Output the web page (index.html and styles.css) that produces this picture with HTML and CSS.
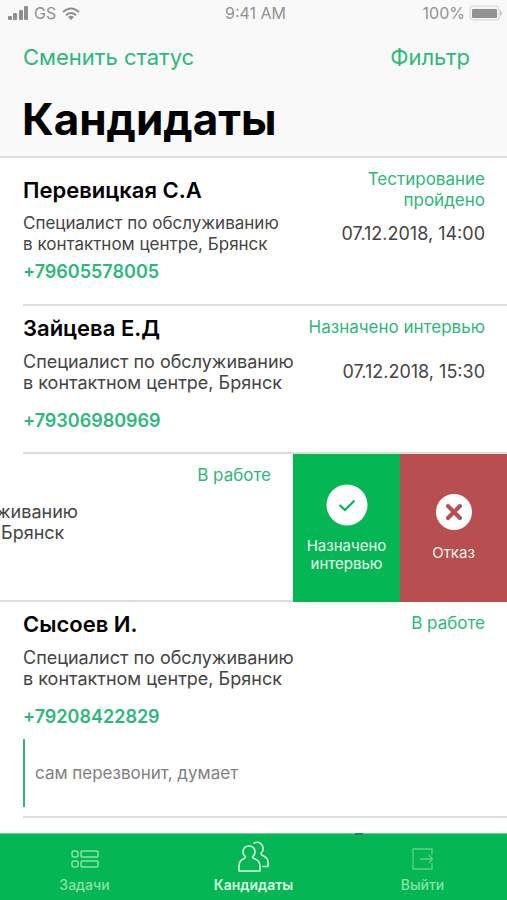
FILE: index.html
```html
<!DOCTYPE html>
<html lang="ru">
<head>
    <meta charset="UTF-8">
    <meta name="viewport" content="width=device-width, initial-scale=1.0">
    <title>Кандидаты</title>
    <link rel="stylesheet" href="styles.css">
</head>
<body>
    <div class="app">
        <header class="header">
            <div class="statusbar">
                <div class="carrier">
                    <svg width="20" height="14" viewBox="0 0 20 14" fill="#8e8e8e">
                        <rect x="0" y="10" width="4" height="4" rx="1"/>
                        <rect x="5" y="7" width="4" height="7" rx="1"/>
                        <rect x="11" y="4" width="4" height="10" rx="1"/>
                        <rect x="16" y="0" width="4" height="14" rx="1"/>
                    </svg>
                    <span>GS</span>
                    <svg width="18" height="13" viewBox="0 0 18 13" fill="none" stroke="#8e8e8e" stroke-width="2">
                        <path d="M1 5Q9-2 17 5"/>
                        <path d="M4 8.200Q9 3.800 14 8.200"/>
                        <path d="M6 10Q9 7.500 12 10L9 13Z" fill="#8e8e8e" stroke="none"/>
                    </svg>
                </div>
                <span>9:41 AM</span>
                <div class="battery">
                    <span>100%</span>
                    <svg width="34" height="16" viewBox="0 0 34 16">
                        <rect x="1" y="1" width="29" height="14" rx="3" fill="#f4f4f4" stroke="#d4d4d4"/>
                        <rect x="3" y="4" width="25" height="9" rx="1" fill="#929292"/>
                        <path d="M31 5Q33 6 33 8Q33 10 31 11Z" fill="#c4c4c4"/>
                    </svg>
                </div>
            </div>
            <div class="actions">
                <button type="button">Сменить статус</button>
                <button type="button">Фильтр</button>
            </div>
            <h1>Кандидаты</h1>
        </header>

        <main class="list">
            <article class="card">
                <div class="info">
                    <h2 class="name-low">Перевицкая С.А</h2>
                    <p class="job job-small">Специалист по обслуживанию<br>в контактном центре, Брянск</p>
                    <a class="phone phone-near" href="tel:+79605578005">+79605578005</a>
                </div>
                <div class="side">
                    <p class="state">Тестирование<br>пройдено</p>
                    <time datetime="2018-12-07T14:00">07.12.2018, 14:00</time>
                </div>
            </article>

            <article class="card">
                <div class="info">
                    <h2>Зайцева Е.Д</h2>
                    <p class="job">Специалист по обслуживанию<br>в контактном центре, Брянск</p>
                    <a class="phone" href="tel:+79306980969">+79306980969</a>
                </div>
                <div class="side">
                    <p class="state">Назначено интервью</p>
                    <time class="time-low" datetime="2018-12-07T15:30">07.12.2018, 15:30</time>
                </div>
            </article>

            <!-- карточка, сдвинутая свайпом -->
            <article class="swiped">
                <div class="swiped-card">
                    <p class="job swiped-job">живанию<br>&nbsp;Брянск</p>
                    <p class="state">В работе</p>
                </div>
                <button type="button" class="swipe-btn accept">
                    <svg width="42" height="42" viewBox="0 0 42 42" fill="none">
                        <circle cx="21" cy="21" r="20.500" fill="#fff"/>
                        <path d="M13.500 21L19 26L28.500 16.500" stroke="#05b654" stroke-width="2.200"/>
                    </svg>
                    <span>Назначено<br>интервью</span>
                </button>
                <button type="button" class="swipe-btn reject">
                    <svg width="36" height="36" viewBox="0 0 36 36" fill="none">
                        <circle cx="18" cy="18" r="18" fill="#fff"/>
                        <path d="M12 12L24 24M24 12L12 24" stroke="#b74f50" stroke-width="4" stroke-linecap="round"/>
                    </svg>
                    <span>Отказ</span>
                </button>
            </article>

            <article class="card card-note">
                <div class="info">
                    <h2>Сысоев И.</h2>
                    <p class="job">Специалист по обслуживанию<br>в контактном центре, Брянск</p>
                    <a class="phone" href="tel:+79208422829">+79208422829</a>
                    <p class="note">сам перезвонит, думает</p>
                </div>
                <div class="side">
                    <p class="state">В работе</p>
                </div>
            </article>
        </main>

        <nav class="tabbar">
            <a class="tab" href="#tasks">
                <svg width="28" height="20" viewBox="0 0 28 20" fill="none" stroke="currentColor" stroke-width="1.500">
                    <rect x="1" y="2" width="6" height="6" rx="2"/>
                    <rect x="10" y="2" width="17" height="6" rx="1"/>
                    <rect x="1" y="12" width="6" height="6" rx="2"/>
                    <rect x="10" y="12" width="17" height="6" rx="1"/>
                </svg>
                <span>Задачи</span>
            </a>
            <a class="tab active" href="#candidates">
                <svg width="32" height="32" viewBox="0 0 32 32" fill="none" stroke="currentColor" stroke-width="1.600" stroke-linejoin="round" stroke-linecap="round">
                    <path d="M7.500 16C3 12 5 5 11 5C17 5 19 12 14.500 16C15 19 22 17 22 25V30H1V25C1 17 7 19 7.500 16Z"/>
                    <path d="M16 2C23-1 28 7 23 12.500C23 15.500 30 14.500 30 21V25.500H25"/>
                </svg>
                <span>Кандидаты</span>
            </a>
            <a class="tab exit" href="#exit">
                <svg width="22" height="22" viewBox="0 0 22 22" fill="none" stroke="currentColor" stroke-width="1.300">
                    <path d="M20 7V1H1V21H20V15"/>
                    <path d="M8 11H20M17 7L20.500 11L17 15"/>
                </svg>
                <span>Выйти</span>
            </a>
        </nav>
    </div>
</body>
</html>
```
FILE: styles.css
```css
* {
    box-sizing: border-box;
}
body {
    margin: 0;
    font-family: Inter, "Liberation Sans", sans-serif;
    background: #fff;
    color: #444;
}
h1, h2, p {
    margin: 0;
}
button {
    font-family: inherit;
    border: none;
    padding: 0;
    background: none;
    cursor: pointer;
}
a {
    text-decoration: none;
}
svg {
    display: block;
    flex-shrink: 0;
}
.app {
    display: flex;
    flex-direction: column;
    min-height: 100vh;
}
.header {
    background: #f9f9f9;
    border-bottom: 2px solid #dedede;
}
.statusbar {
    display: grid;
    grid-template-columns: 1fr auto 1fr;
    align-items: center;
    padding: 4px 4px 0 8px;
    font-size: 16px;
    line-height: 18px;
    color: #929292;
}
.carrier, .battery {
    display: flex;
    align-items: center;
    gap: 6px;
}
.battery {
    justify-content: flex-end;
    gap: 4px;
}
.actions {
    display: flex;
    justify-content: space-between;
    padding: 21px 37px 0 23px;
}
.actions button {
    font-size: 22px;
    line-height: 28px;
    color: #2cb87a;
}
h1 {
    padding: 24px 22px 13px;
    font-size: 44px;
    line-height: 48px;
    font-weight: 700;
    color: #000;
}
.list {
    flex: 1;
}
.card {
    display: flex;
    justify-content: space-between;
    min-height: 148px;
    margin-left: 23px;
    padding: 8px 22px 0 0;
    border-bottom: 2px solid #dedede;
}
h2 {
    font-size: 22px;
    line-height: 28px;
    font-weight: 600;
    color: #000;
}
.name-low {
    padding-top: 10px;
}
.job {
    padding-top: 9px;
    font-size: 18px;
    line-height: 21px;
}
.job-small {
    font-size: 17px;
}
.phone {
    display: block;
    padding-top: 17px;
    font-size: 18px;
    line-height: 22px;
    font-weight: 600;
    color: #2cb87a;
}
.phone-near {
    padding-top: 6px;
}
.side {
    text-align: right;
}
.state {
    padding-top: 3px;
    font-size: 17px;
    line-height: 21px;
    color: #2cb87a;
}
time {
    display: block;
    padding-top: 12px;
    font-size: 18px;
    line-height: 22px;
}
.time-low {
    padding-top: 23px;
}
.swiped {
    display: flex;
    min-height: 148px;
}
.swiped-card {
    flex: 1;
    display: flex;
    justify-content: space-between;
    padding: 8px 22px 0 0;
    border-bottom: 2px solid #dedede;
    overflow: hidden;
}
.swiped-job {
    margin-left: -4px;
    padding-top: 39px;
}
.swipe-btn {
    display: flex;
    flex-direction: column;
    align-items: center;
    justify-content: center;
    gap: 11px;
    width: 107px;
    font-size: 15px;
    line-height: 18px;
    color: #e9f5ec;
}
.accept {
    background: #05b654;
}
.reject {
    gap: 14px;
    background: #b74f50;
}
.note {
    display: flex;
    align-items: center;
    min-height: 68px;
    margin-top: 11px;
    padding-left: 10px;
    border-left: 2px solid #2cb87a;
    font-size: 17px;
    color: #808080;
}
.card-note {
    min-height: 216px;
}
.tabbar {
    position: sticky;
    bottom: 0;
    display: grid;
    grid-template-columns: repeat(3, 1fr);
    height: 67px;
    padding: 7px 0 6px;
    border-top: 1px solid #6fd096;
    background: #05b654;
}
/* край следующей карточки над панелью */
.tabbar::before {
    content: "";
    position: absolute;
    top: -1px;
    left: 70%;
    width: 8px;
    height: 2px;
    background: #12904c;
}
.tab {
    display: grid;
    grid-template-rows: 1fr 18px;
    align-items: center;
    justify-items: center;
    font-size: 14px;
    line-height: 18px;
    font-weight: 500;
    color: #8be2a8;
}
.active {
    font-weight: 600;
    color: #d8f7e2;
}
.active svg {
    align-self: start;
}
.exit svg {
    color: #62d287;
}
```
